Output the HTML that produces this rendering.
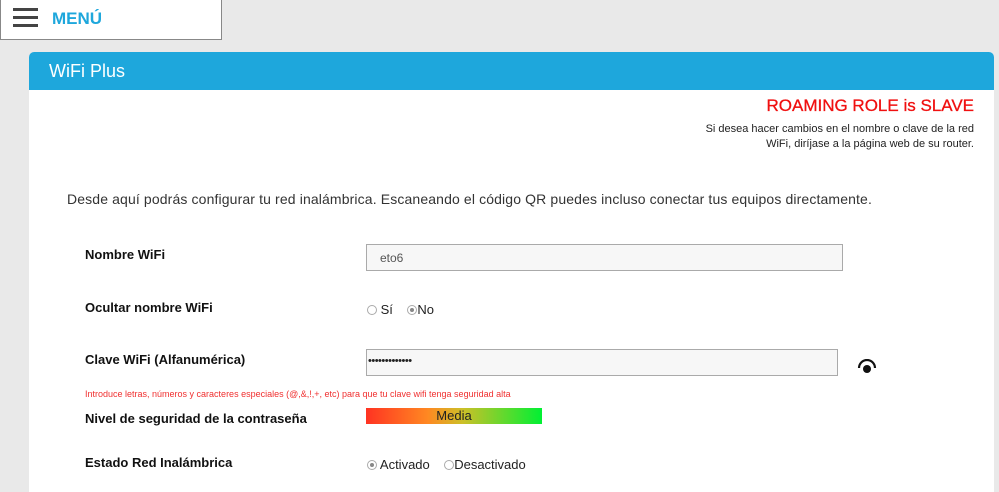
<!DOCTYPE html>
<html><head><meta charset="utf-8"><style>
*{margin:0;padding:0;box-sizing:border-box}
body{width:999px;height:488px;background:#e9e9e9;font-family:"Liberation Sans",sans-serif;position:relative;overflow:hidden;color:#222}
.a{position:absolute;white-space:nowrap}
.menu{left:0;top:-1px;width:222px;height:41px;background:#fff;border:1px solid #888}
.bar{position:absolute;left:12px;width:25px;height:3px;background:#444}
.panel{left:29px;top:52px;width:965px;height:440px;background:#fff;border-radius:5px 5px 0 0}
.hdr{left:29px;top:52px;width:965px;height:38px;background:#1ea7dc;border-radius:5px 5px 0 0;color:#fff;font-size:18px;padding:9px 0 0 20px}
.lbl{font-size:13px;font-weight:bold;color:#111}
.inp{background:#f7f7f7;border:1px solid #aaa;height:27px}
.rad{display:inline-block;width:10px;height:10px;border:1px solid #aaa;border-radius:50%;vertical-align:-1px;position:relative}
.rad.on::after{content:"";position:absolute;left:2px;top:2px;width:4px;height:4px;border-radius:50%;background:#888}
</style></head><body>
<div class="a menu"><div class="bar" style="top:8px"></div><div class="bar" style="top:16px"></div><div class="bar" style="top:24px"></div>
<div class="a" style="left:51px;top:9px;color:#1ea7dc;font-weight:bold;font-size:17px">MENÚ</div></div>
<div class="a panel"></div>
<div class="a hdr">WiFi Plus</div>
<div class="a" style="right:25px;top:96px;color:#f01010;font-size:17px;-webkit-text-stroke:0.3px #f01010">ROAMING ROLE is SLAVE</div>
<div class="a" style="right:25px;top:122px;font-size:11px;text-align:right;line-height:15px">Si desea hacer cambios en el nombre o clave de la red<br>WiFi, diríjase a la página web de su router.</div>
<div class="a" style="left:67px;top:191px;font-size:14px;color:#333;letter-spacing:0.13px">Desde aquí podrás configurar tu red inalámbrica. Escaneando el código QR puedes incluso conectar tus equipos directamente.</div>
<div class="a lbl" style="left:85px;top:247px">Nombre WiFi</div>
<div class="a inp" style="left:366px;top:244px;width:477px"></div>
<div class="a" style="left:380px;top:251px;font-size:12px;color:#555">eto6</div>
<div class="a lbl" style="left:85px;top:300px">Ocultar nombre WiFi</div>
<div class="a" style="left:367px;top:302px;font-size:13px"><span class="rad"></span> Sí &nbsp; &nbsp;<span class="rad on"></span>No</div>
<div class="a lbl" style="left:85px;top:352px">Clave WiFi (Alfanumérica)</div>
<div class="a inp" style="left:366px;top:349px;width:472px"></div>
<div class="a" style="left:368px;top:355px;font-size:11px;letter-spacing:-0.5px">•••••••••••••</div>
<svg class="a" style="left:857px;top:359px" width="20" height="16" viewBox="0 0 20 16"><path d="M2 9 A8 8 0 0 1 18 9" fill="none" stroke="#111" stroke-width="2.2"/><circle cx="10" cy="10" r="4" fill="#111"/></svg>
<div class="a" style="left:85px;top:389px;font-size:9px;color:#f03030">Introduce letras, números y caracteres especiales (@,&amp;,!,+, etc) para que tu clave wifi tenga seguridad alta</div>
<div class="a lbl" style="left:85px;top:411px">Nivel de seguridad de la contraseña</div>
<div class="a" style="left:366px;top:408px;width:176px;height:16px;background:linear-gradient(90deg,#ff3322,#ff8822 35%,#ccc028 55%,#00f033);font-size:13px;text-align:center;line-height:16px">Media</div>
<div class="a lbl" style="left:85px;top:455px">Estado Red Inalámbrica</div>
<div class="a" style="left:367px;top:457px;font-size:13px"><span class="rad on"></span> Activado &nbsp; &nbsp;<span class="rad"></span>Desactivado</div>
</body></html>
